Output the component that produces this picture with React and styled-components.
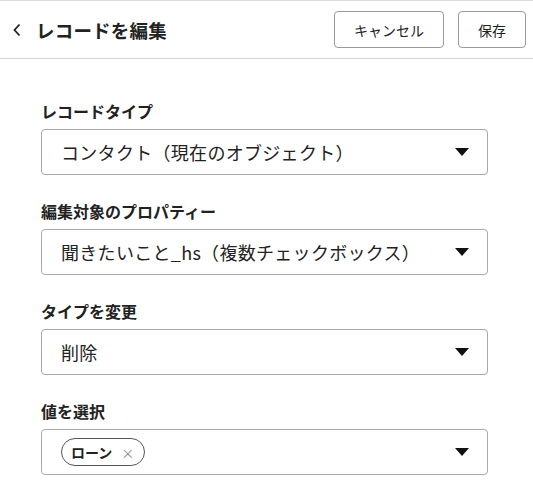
import { createGlobalStyle, styled } from "styled-components";

const GlobalStyle = createGlobalStyle`
  body {
    margin: 0;
    background: #fff;
    font-family: "Noto Sans CJK JP", "Noto Sans", sans-serif;
    color: #222;
  }
`;

const Page = styled.div`
  width: 533px;
`;

const Header = styled.header`
  display: flex;
  align-items: center;
  justify-content: space-between;
  height: 57px;
  border-top: 1px solid #dcdcdc;
  border-bottom: 1px solid #d6d6d6;
  padding: 0 7px 0 9px;
`;

const TitleGroup = styled.div`
  display: flex;
  align-items: center;
  gap: 11px;
`;

const BackButton = styled.button`
  display: flex;
  align-items: center;
  justify-content: center;
  width: 16px;
  height: 20px;
  padding: 0;
  border: none;
  background: transparent;
  color: #222;
`;

const Title = styled.h1`
  margin: 0;
  font-size: 18.5px;
  font-weight: 700;
  letter-spacing: 0.2px;
`;

const Actions = styled.div`
  display: flex;
  gap: 14px;
`;

const Button = styled.button`
  height: 37px;
  width: ${(p) => p.$width}px;
  border: 1px solid #9a9a9a;
  border-radius: 4px;
  background: #fff;
  font-family: inherit;
  font-size: 14px;
  color: #222;
`;

const Form = styled.div`
  padding: 42px 45px 0 41px;
  display: flex;
  flex-direction: column;
`;

const Field = styled.div`
  display: flex;
  flex-direction: column;
  gap: 8px;
  margin-bottom: 26px;
`;

const Label = styled.label`
  font-size: 16px;
  font-weight: 700;
  line-height: 20px;
  height: 20px;
`;

const Select = styled.div`
  display: flex;
  align-items: center;
  justify-content: space-between;
  height: 46px;
  box-sizing: border-box;
  border: 1px solid #a8a8a8;
  border-radius: 4px;
  padding: 0 18px 0 19px;
  font-size: 18px;
`;

const Value = styled.span`
  letter-spacing: 0.3px;
`;

const Chip = styled.span`
  display: inline-flex;
  align-items: center;
  gap: 9px;
  height: 26px;
  padding: 0 10px 0 9px;
  border: 1px solid #555;
  border-radius: 14px;
  font-size: 14px;
  font-weight: 700;
`;

const ChipClose = styled.span`
  color: #888;
  font-size: 13px;
  font-weight: 400;
`;

const Caret = () => (
  <svg width="14" height="8" viewBox="0 0 14 8">
    <path d="M0 0 H14 L7 8 Z" fill="#111" />
  </svg>
);

const fields = [
  { label: "レコードタイプ", value: "コンタクト（現在のオブジェクト）" },
  { label: "編集対象のプロパティー", value: "聞きたいこと_hs（複数チェックボックス）" },
  { label: "タイプを変更", value: "削除" },
];

export default function App() {
  return (
    <Page>
      <GlobalStyle />
      <Header>
        <TitleGroup>
          <BackButton aria-label="戻る">
            <svg width="10" height="14" viewBox="0 0 10 14">
              <path d="M7.5 1.5 L2.5 7 L7.5 12.5" fill="none" stroke="#222" strokeWidth="1.8" />
            </svg>
          </BackButton>
          <Title>レコードを編集</Title>
        </TitleGroup>
        <Actions>
          <Button $width={110}>キャンセル</Button>
          <Button $width={68}>保存</Button>
        </Actions>
      </Header>
      <Form>
        {fields.map((f) => (
          <Field key={f.label}>
            <Label>{f.label}</Label>
            <Select>
              <Value>{f.value}</Value>
              <Caret />
            </Select>
          </Field>
        ))}
        <Field>
          <Label>値を選択</Label>
          <Select>
            <Chip>
              ローン <ChipClose>×</ChipClose>
            </Chip>
            <Caret />
          </Select>
        </Field>
      </Form>
    </Page>
  );
}
